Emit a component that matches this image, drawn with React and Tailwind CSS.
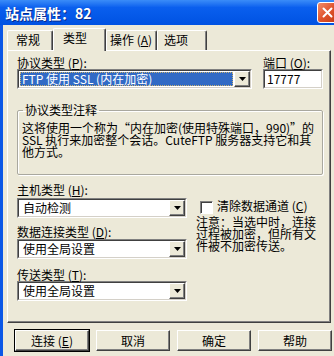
import React from 'react';

const raised = 'border border-t-white border-l-white border-b-[#404040] border-r-[#404040] shadow-[inset_-1px_-1px_0_#808080]';

function DropBtn() {
  return (
    <div className={`w-[16px] h-full shrink-0 bg-[#ece9d8] flex items-center justify-center ${raised}`}>
      <svg width="7" height="4" viewBox="0 0 7 4"><path d="M0 0h7L3.5 4z" fill="#000" /></svg>
    </div>
  );
}

function Sunken({ className, children }) {
  return (
    <div className={`h-[20px] border border-t-[#808080] border-l-[#808080] border-b-white border-r-white ${className}`}>
      <div className="h-full flex border border-t-[#404040] border-l-[#404040] border-b-[#d4d0c8] border-r-[#d4d0c8] bg-white">
        {children}
      </div>
    </div>
  );
}

function Combo({ className, value, selected }) {
  return (
    <Sunken className={className}>
      <div className="flex-1 flex items-center p-[1px] min-w-0">
        {selected ? (
          <div className="h-full w-full flex items-center pl-[2px] bg-[#316ac5] text-white outline outline-1 outline-dotted outline-[#c8b070] -outline-offset-1 whitespace-nowrap">{value}</div>
        ) : (
          <div className="pl-[3px] whitespace-nowrap">{value}</div>
        )}
      </div>
      <DropBtn />
    </Sunken>
  );
}

function Tab({ label, active, className }) {
  if (active) {
    return (
      <div className={`relative z-10 h-[23px] -mb-[1px] bg-[#ece9d8] border-t border-l border-t-white border-l-white border-r border-r-[#404040] shadow-[inset_-1px_0_0_#808080] rounded-t-[2px] pt-[3px] ${className}`}>
        {label}
      </div>
    );
  }
  return (
    <div className={`h-[20px] bg-[#ece9d8] border-t border-l border-t-white border-l-white border-r border-r-[#404040] shadow-[inset_-1px_0_0_#808080] rounded-t-[2px] pt-[3px] ${className}`}>
      {label}
    </div>
  );
}

function Button({ label, isDefault }) {
  return (
    <button className={`w-[74px] h-[21px] bg-[#ece9d8] text-[12px] leading-[12px] text-black ${isDefault ? 'outline outline-1 outline-black' : ''} ${raised}`}>
      {label}
    </button>
  );
}

export default function App() {
  return (
    <div lang="zh-CN" className="w-[334px] h-[356px] overflow-hidden bg-[#ece9d8] flex flex-col font-['Noto_Sans_CJK_SC',sans-serif] text-[12px] leading-[12px] text-black">
      {/* title bar */}
      <div className="h-[25px] shrink-0 flex items-center pl-[5px] bg-gradient-to-b from-[#3a8cf8] via-[#0a5fee] via-30% to-[#0052e2]">
        <div className="text-white font-bold text-[14px] leading-[14px] [text-shadow:1px_1px_0_#0a2c8a]">站点属性：82</div>
        <div className="ml-auto -mr-[4px] w-[21px] h-[21px] shrink-0 rounded-[3px] border border-white bg-gradient-to-br from-[#f08b68] via-[#e0532b] to-[#c33b12] flex items-center justify-center">
          <svg width="11" height="11" viewBox="0 0 11 11"><path d="M1.5 1.5l8 8M9.5 1.5l-8 8" stroke="#fff" strokeWidth="2" strokeLinecap="round" /></svg>
        </div>
      </div>

      <div className="flex-1 flex flex-col border-l-[3px] border-l-[#0b57e6] pl-[4px]">
        {/* tabs */}
        <div className="mt-[3px] h-[22px] flex items-end">
          <Tab label="常规" className="w-[46px] pl-[8px]" />
          <Tab label="类型" active className="w-[53px] pl-[9px]" />
          <Tab label={<span>操作 (<u>A</u>)</span>} className="w-[51px] pl-[3px]" />
          <Tab label="选项" className="w-[50px] pl-[6px]" />
        </div>

        {/* panel */}
        <div className="w-[324px] h-[273px] border border-t-white border-l-white border-b-[#404040] border-r-[#404040] shadow-[inset_-1px_-1px_0_#808080] pl-[9px] pt-[6px]">
          <div className="flex">
            <div className="w-[235px]">
              <div>协议类型 (<u>P</u>):</div>
              <Combo className="w-[235px]" value="FTP 使用 SSL (内在加密)" selected />
            </div>
            <div className="ml-[11px] w-[60px]">
              <div>端口 (<u>O</u>):</div>
              <Sunken className="w-[60px]">
                <div className="flex items-center pl-[2px]">17777</div>
              </Sunken>
            </div>
          </div>

          <fieldset className="mt-[15px] w-[306px] h-[71px] border border-[#a9a89f] shadow-[inset_1px_1px_0_#fff,1px_1px_0_#fff] pl-[4px] pt-[6px] rounded-[2px]">
            <legend className="ml-[1px] px-[2px]">协议类型注释</legend>
            <div className="whitespace-nowrap">
              这将使用一个称为“内在加密(使用特殊端口，990)”的<br />
              SSL 执行来加密整个会话。CuteFTP 服务器支持它和其<br />
              他方式。
            </div>
          </fieldset>

          <div className="mt-[9px] flex">
            <div className="w-[170px]">
              <div>主机类型 (<u>H</u>):</div>
              <Combo className="mt-[2px] w-[170px]" value="自动检测" />
              <div className="mt-[8px]">数据连接类型 (<u>D</u>):</div>
              <Combo className="mt-[1px] w-[170px]" value="使用全局设置" />
              <div className="mt-[10px]">传送类型 (<u>T</u>):</div>
              <Combo className="w-[170px]" value="使用全局设置" />
            </div>
            <div className="ml-[9px] pt-[17px]">
              <div className="flex items-center h-[13px]">
                <div className="ml-[4px] w-[13px] h-[13px] bg-white border border-t-[#808080] border-l-[#808080] border-b-white border-r-white shadow-[inset_1px_1px_0_#404040]" />
                <div className="ml-[4px] -mt-[3px]">清除数据通道 (<u>C</u>)</div>
              </div>
              <div className="mt-[2px] leading-[12px] whitespace-nowrap">
                注意：当选中时，连接<br />
                过程被加密，但所有文<br />
                件被不加密传送。
              </div>
            </div>
          </div>
        </div>

        {/* buttons */}
        <div className="mt-[7px] pl-[8px] flex gap-[7px]">
          <Button label={<span>连接 (<u>E</u>)</span>} isDefault />
          <Button label="取消" />
          <Button label="确定" />
          <Button label="帮助" />
        </div>
      </div>
    </div>
  );
}
